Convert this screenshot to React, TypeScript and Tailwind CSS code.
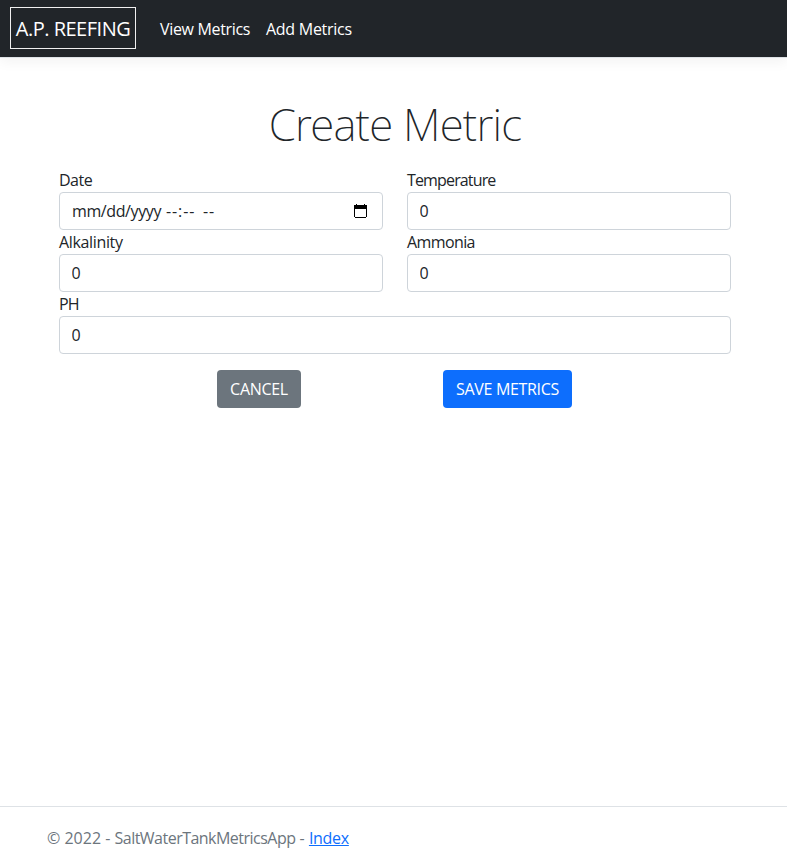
function CalendarIcon() {
  return (
    <svg className="mr-[3px] h-[14px] w-[13px]" viewBox="0 0 13 14" shapeRendering="crispEdges" aria-hidden="true">
      <path fill="#000" fillRule="evenodd" d="M2 0h1v1h7V0h1v1h2v12H12v1H1v-1H0V1h2zM1 5v8h11V5z" />
    </svg>
  );
}

const control =
  'flex h-[38px] w-full items-center rounded border border-[#ced4da] bg-white px-3 text-base leading-6 text-[#212529] outline-none';

type FieldProps = { label: string; labelClass: string; wrapClass?: string };

function NumberField({ label, labelClass, wrapClass = '' }: FieldProps) {
  return (
    <label className={`flex flex-col ${wrapClass}`}>
      <span className={`h-6 leading-[25px] ${labelClass}`}>{label}</span>
      <input className={`${control} pl-[11.5px]`} defaultValue="0" />
    </label>
  );
}

function DateField() {
  return (
    <div className="flex flex-col">
      <span className="h-6 leading-[25px] tracking-[-0.5px]">Date</span>
      <div className={`${control} justify-between whitespace-pre`}>
        <span className="flex">
          <span className="w-[94px] tracking-[-0.4px]">mm/dd/yyyy</span>
          <span className="w-[37px] tracking-[0.9px]">--:--</span>
          <span className="tracking-[0.9px]">--</span>
        </span>
        <CalendarIcon />
      </div>
    </div>
  );
}

export default function App() {
  return (
    <div className="flex h-[866px] flex-col bg-white font-['Open_Sans','Noto_Sans',sans-serif] text-base text-[#212529]">
      <header className="flex h-[58px] shrink-0 items-start border-b border-[#dee2e6] bg-[#212529] shadow-[0_4px_12px_rgba(0,0,0,0.05)]">
        <a className="ml-2.5 mt-[7px] flex h-[42px] w-[126px] items-center justify-center whitespace-nowrap border border-[#f0f0f0] pt-px text-[20px] tracking-[-0.5px] text-white">
          A.P. REEFING
        </a>
        <nav className="ml-6 mt-[17px] flex gap-4 whitespace-nowrap leading-6 text-white">
          <a className="w-[90px] tracking-[-0.33px]">View Metrics</a>
          <a className="tracking-[-0.27px]">Add Metrics</a>
        </nav>
      </header>

      <main className="flex-1 pl-[59px] pr-14 pt-[39px]">
        <h1 className="h-[54px] whitespace-nowrap text-center font-['Noto_Sans','Open_Sans',sans-serif] text-[44px] font-extralight leading-[54px] tracking-[-0.8px]">
          Create Metric
        </h1>
        <form className="mt-[17px]">
          <div className="grid grid-cols-2 gap-x-6">
            <DateField />
            <NumberField label="Temperature" labelClass="tracking-[-0.85px]" />
            <NumberField label="Alkalinity" labelClass="tracking-[-0.35px]" />
            <NumberField label="Ammonia" labelClass="tracking-[-0.6px]" />
            <NumberField label="PH" labelClass="tracking-[-0.9px]" wrapClass="col-span-2" />
          </div>
          <div className="mt-4 flex pl-[158px]">
            <button type="button" className="h-[38px] w-[84px] whitespace-nowrap rounded bg-[#6c757d] tracking-[-0.3px] text-white">
              CANCEL
            </button>
            <button type="button" className="ml-[142px] h-[38px] w-[129px] whitespace-nowrap rounded bg-[#0d6efd] tracking-[-0.33px] text-white">
              SAVE METRICS
            </button>
          </div>
        </form>
      </main>

      <footer className="h-[60px] shrink-0 whitespace-nowrap border-t border-[#dee2e6] pl-[47px] pt-[19px] leading-6 text-[#6c757d]">
        © 2022 - <span className="tracking-[-0.52px]">SaltWaterTankMetricsApp</span> -{' '}
        <a className="tracking-[-0.3px] text-[#0d6efd] underline">Index</a>
      </footer>
    </div>
  );
}
